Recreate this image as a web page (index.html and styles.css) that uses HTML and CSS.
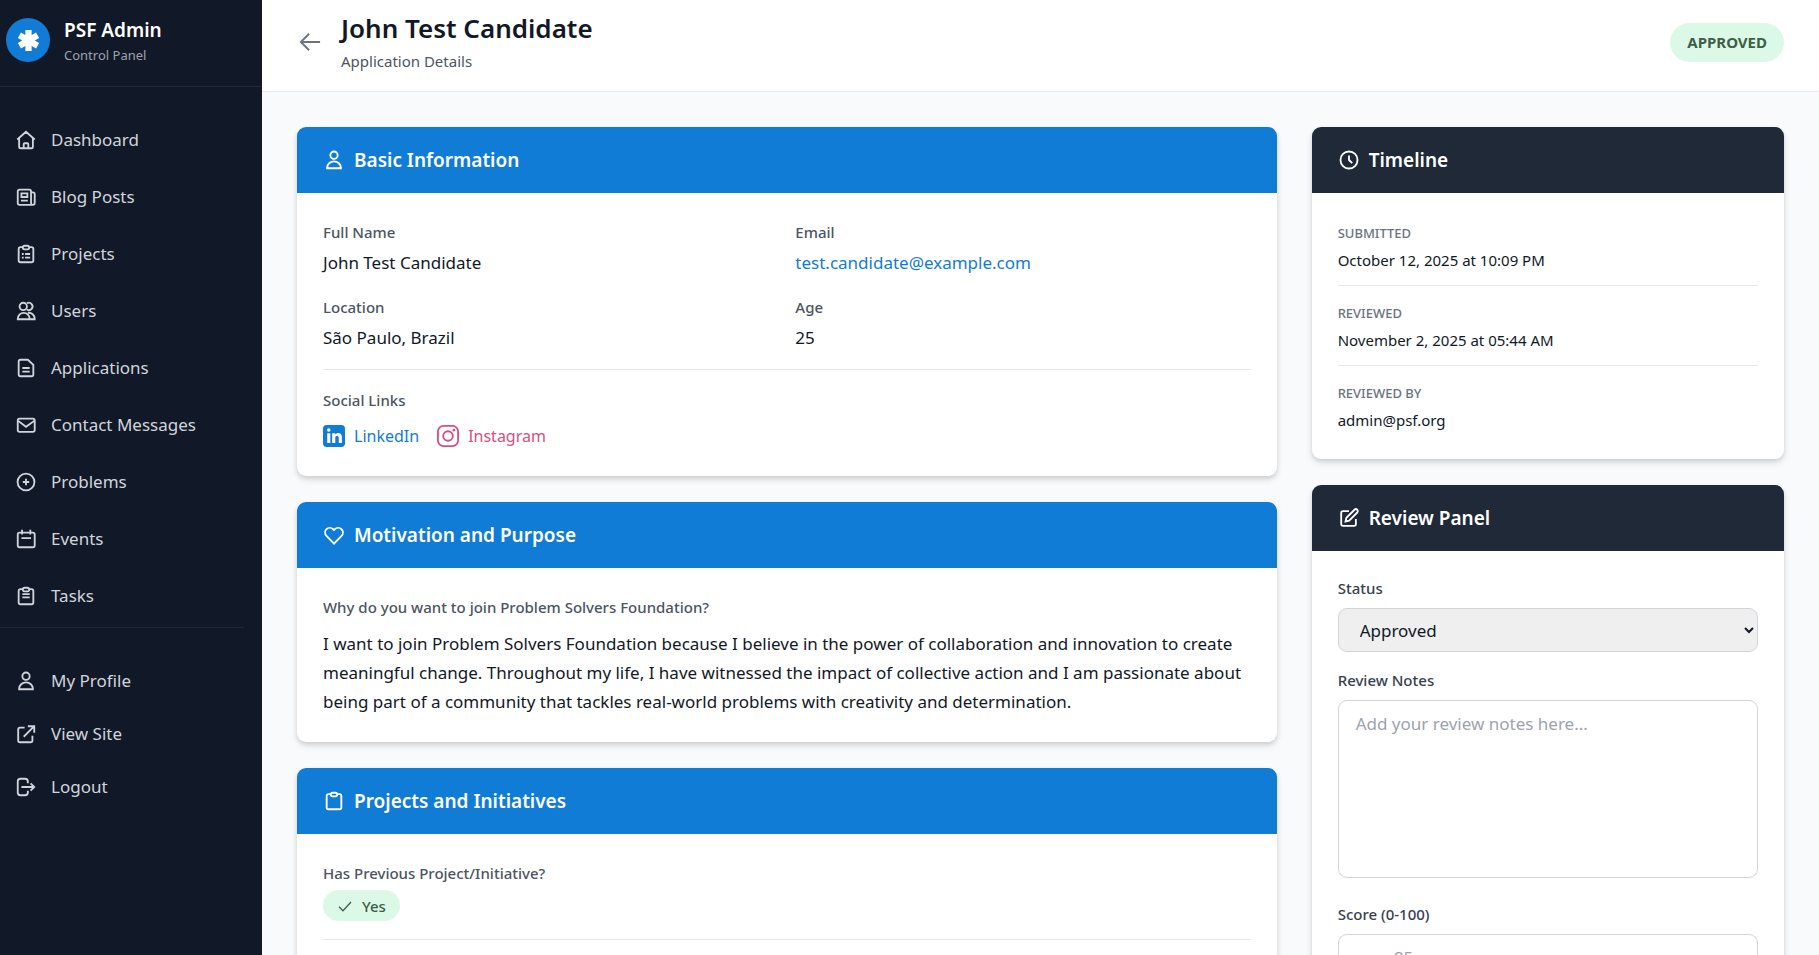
FILE: index.html
```html
<!DOCTYPE html>
<html lang="en">
<head>
    <meta charset="UTF-8">
    <meta name="viewport" content="width=device-width, initial-scale=1.0">
    <link rel="stylesheet" href="styles.css">
    <title>John Test Candidate - PSF Admin</title>
</head>
<body>
    <aside class="sidebar">
        <div class="brand">
            <div class="brand-logo">
                <svg viewBox="0 0 24 24" aria-hidden="true"><path d="M12 1v22M2.500 6.500l19 11M21.500 6.500l-19 11" fill="none" stroke="#fff" stroke-width="6.500"/></svg>
            </div>
            <div>
                <div class="brand-name">PSF Admin</div>
                <div class="brand-sub">Control Panel</div>
            </div>
        </div>

        <nav>
            <ul class="menu">
                <li><a href="#"><svg class="icon" viewBox="0 0 24 24"><path d="M2.500 11.500L12 3l9.500 8.500M4.500 10v9.500a1.500 1.500 0 0 0 1.500 1.500h12a1.500 1.500 0 0 0 1.500-1.500V10M9.500 21v-4.500a1 1 0 0 1 1-1h3a1 1 0 0 1 1 1V21"/></svg>Dashboard</a></li>
                <li><a href="#"><svg class="icon" viewBox="0 0 24 24"><path d="M19.500 20.500H5a2 2 0 0 1-2-2V6a2 2 0 0 1 2-2h10.500a2 2 0 0 1 2 2v12.500a2 2 0 0 0 4 0V9a2 2 0 0 0-2-2h-2M7 8h6.500v4H7zM6.500 16H14"/></svg>Blog Posts</a></li>
                <li><a href="#"><svg class="icon" viewBox="0 0 24 24"><path d="M8.500 4.500H6A2 2 0 0 0 4 6.500V19a2 2 0 0 0 2 2h12a2 2 0 0 0 2-2V6.500a2 2 0 0 0-2-2h-2.500M10.500 3h3a2 2 0 0 1 0 4h-3a2 2 0 0 1 0-4zM7.500 12h2M11 12h5.500M7.500 16h2M11 16h5.500"/></svg>Projects</a></li>
                <li><a href="#"><svg class="icon" viewBox="0 0 24 24"><circle cx="9" cy="7" r="4"/><path d="M13 3.600a4 4 0 1 1 0 6.800M3 21v-.500a6.500 6.500 0 0 1 13 0v.500zM14 14a6.500 6.500 0 0 1 7.500 6.500v.500H16"/></svg>Users</a></li>
                <li><a href="#"><svg class="icon" viewBox="0 0 24 24"><path d="M14 3H6a2 2 0 0 0-2 2v14a2 2 0 0 0 2 2h12a2 2 0 0 0 2-2V8.500zM8 12h8M8 16h8"/></svg>Applications</a></li>
                <li><a href="#"><svg class="icon" viewBox="0 0 24 24"><rect x="3" y="5" width="18.500" height="14.500" rx="2"/><path d="M3.500 7.500l8.500 6.500 9-6.500"/></svg>Contact Messages</a></li>
                <li><a href="#"><svg class="icon" viewBox="0 0 24 24"><circle cx="12" cy="12" r="9.200"/><path d="M12 8.500v7M8.500 12h7"/></svg>Problems</a></li>
                <li><a href="#"><svg class="icon" viewBox="0 0 24 24"><rect x="3" y="5" width="18.500" height="16" rx="2"/><path d="M7.700 2v5M16.700 2v5M7 11h10.500"/></svg>Events</a></li>
                <li><a href="#"><svg class="icon" viewBox="0 0 24 24"><path d="M8.500 4.500H6A2 2 0 0 0 4 6.500V19a2 2 0 0 0 2 2h12a2 2 0 0 0 2-2V6.500a2 2 0 0 0-2-2h-2.500M10.500 3h3a2 2 0 0 1 0 4h-3a2 2 0 0 1 0-4zM8 10h8M8 13.500h8"/></svg>Tasks</a></li>
            </ul>
            <ul class="menu menu-bottom">
                <li><a href="#"><svg class="icon" viewBox="0 0 24 24"><circle cx="12" cy="6.700" r="4"/><path d="M4.500 21v-.500a7.500 7 0 0 1 15 0v.500z"/></svg>My Profile</a></li>
                <li><a href="#"><svg class="icon" viewBox="0 0 24 24"><path d="M10.500 5H5.500a2 2 0 0 0-2 2v12a2 2 0 0 0 2 2H17a2 2 0 0 0 2-2v-5M14 3.500h7v7M21 3.500L9.500 15"/></svg>View Site</a></li>
                <li><a href="#"><svg class="icon" viewBox="0 0 24 24"><path d="M14 8V6a3 3 0 0 0-3-3H6a3 3 0 0 0-3 3v12a3 3 0 0 0 3 3h5a3 3 0 0 0 3-3v-2M7 12h14M17 8l4 4-4 4"/></svg>Logout</a></li>
            </ul>
        </nav>
    </aside>

    <div class="page">
        <header class="topbar">
            <a class="back" href="#" aria-label="Back"><svg class="icon" viewBox="0 0 24 24"><path d="M23 12H2M11 3l-9 9 9 9"/></svg></a>
            <div class="topbar-title">
                <h1>John Test Candidate</h1>
                <p>Application Details</p>
            </div>
            <span class="badge">APPROVED</span>
        </header>

        <main class="content">
            <div class="col-main">
                <section class="card">
                    <h2 class="card-header"><svg class="icon" viewBox="0 0 24 24"><circle cx="12" cy="6.700" r="4"/><path d="M4.500 21v-.500a7.500 7 0 0 1 15 0v.500z"/></svg>Basic Information</h2>
                    <div class="card-body">
                        <dl class="info">
                            <div>
                                <dt>Full Name</dt>
                                <dd>John Test Candidate</dd>
                            </div>
                            <div>
                                <dt>Email</dt>
                                <dd><a href="mailto:test.candidate@example.com">test.candidate@example.com</a></dd>
                            </div>
                            <div>
                                <dt>Location</dt>
                                <dd>São Paulo, Brazil</dd>
                            </div>
                            <div>
                                <dt>Age</dt>
                                <dd>25</dd>
                            </div>
                        </dl>
                        <div class="social">
                            <h3>Social Links</h3>
                            <div class="social-links">
                                <a href="#"><svg viewBox="0 0 24 24"><rect width="24" height="24" rx="4" fill="#117cd6"/><g fill="#fff"><circle cx="6.300" cy="5.500" r="1.900"/><path d="M4.600 9h3.400v10.500H4.600zM10 9h3.300v1.400c.700-1 1.800-1.700 3.300-1.700 2.900 0 4 1.800 4 4.700v6.100h-3.400v-5.400c0-1.500-.500-2.500-1.800-2.500-1.400 0-2 1-2 2.500v5.400H10z"/></g></svg>LinkedIn</a>
                                <a class="instagram" href="#"><svg viewBox="0 0 24 24" fill="none" stroke="currentColor" stroke-width="2"><rect x="1" y="1" width="22" height="22" rx="6"/><circle cx="12" cy="12" r="5.200"/><circle cx="18.400" cy="5.600" r="1.400" fill="currentColor" stroke="none"/></svg>Instagram</a>
                            </div>
                        </div>
                    </div>
                </section>

                <section class="card">
                    <h2 class="card-header"><svg class="icon" viewBox="0 0 24 24"><path d="M12 21.500L3.800 13a5.200 5.200 0 0 1 0-7.300 5.200 5.200 0 0 1 7.300 0l.900.900.900-.900a5.200 5.200 0 0 1 7.300 0 5.200 5.200 0 0 1 0 7.300z"/></svg>Motivation and Purpose</h2>
                    <div class="card-body">
                        <h3>Why do you want to join Problem Solvers Foundation?</h3>
                        <p class="answer">I want to join Problem Solvers Foundation because I believe in the power of collaboration and innovation to create meaningful change. Throughout my life, I have witnessed the impact of collective action and I am passionate about being part of a community that tackles real-world problems with creativity and determination.</p>
                    </div>
                </section>

                <section class="card">
                    <h2 class="card-header"><svg class="icon" viewBox="0 0 24 24"><path d="M8.500 4.500H6A2 2 0 0 0 4 6.500V19a2 2 0 0 0 2 2h12a2 2 0 0 0 2-2V6.500a2 2 0 0 0-2-2h-2.500M10.500 3h3a2 2 0 0 1 0 4h-3a2 2 0 0 1 0-4z"/></svg>Projects and Initiatives</h2>
                    <div class="card-body">
                        <h3>Has Previous Project/Initiative?</h3>
                        <span class="pill"><svg class="icon" viewBox="0 0 24 24"><path d="M3 13l6 6L21 6"/></svg>Yes</span>
                        <div class="divider"></div>
                    </div>
                </section>
            </div>

            <div class="col-side">
                <section class="card">
                    <h2 class="card-header dark"><svg class="icon" viewBox="0 0 24 24"><circle cx="12" cy="12" r="9.300"/><path d="M12 7v5l3.500 3.500"/></svg>Timeline</h2>
                    <dl class="card-body timeline">
                        <div>
                            <dt>SUBMITTED</dt>
                            <dd>October 12, 2025 at 10:09 PM</dd>
                        </div>
                        <div>
                            <dt>REVIEWED</dt>
                            <dd>November 2, 2025 at 05:44 AM</dd>
                        </div>
                        <div>
                            <dt>REVIEWED BY</dt>
                            <dd>admin@psf.org</dd>
                        </div>
                    </dl>
                </section>

                <section class="card">
                    <h2 class="card-header dark"><svg class="icon" viewBox="0 0 24 24"><path d="M12 4.500H5.500a2 2 0 0 0-2 2v12a2 2 0 0 0 2 2h12a2 2 0 0 0 2-2V13M18 3a2.100 2.100 0 0 1 3 3l-8.800 8.800-4 1 1-4z"/></svg>Review Panel</h2>
                    <form class="card-body review">
                        <div class="field">
                            <label for="status">Status</label>
                            <select id="status" name="status">
                                <option>Approved</option>
                            </select>
                        </div>
                        <div class="field">
                            <label for="notes">Review Notes</label>
                            <textarea id="notes" name="notes" rows="6" placeholder="Add your review notes here..."></textarea>
                        </div>
                        <div class="field">
                            <label for="score">Score (0-100)</label>
                            <input type="number" id="score" name="score" min="0" max="100" placeholder="e.g., 85">
                        </div>
                    </form>
                </section>
            </div>
        </main>
    </div>
</body>
</html>
```
FILE: styles.css
```css
* {
    box-sizing: border-box;
}

body {
    display: flex;
    height: 100vh;
    margin: 0;
    overflow: hidden;
    font-family: "Noto Sans", sans-serif;
    font-size: 17px;
    line-height: 28px;
    color: #111827;
    background-color: #f9fafc;
}

h1, h2, h3, p, ul, dl, dd {
    margin: 0;
    padding: 0;
}

a {
    color: #117cd6;
    text-decoration: none;
}

.icon {
    flex: none;
    width: 22px;
    height: 22px;
    fill: none;
    stroke: currentColor;
    stroke-width: 2;
}

/* Sidebar */
.sidebar {
    flex: none;
    width: 262px;
    background-color: #111827;
}

.brand {
    display: flex;
    align-items: center;
    gap: 14px;
    height: 87px;
    padding: 0 6px 6px;
    border-bottom: 1px solid #1f2937;
}

.brand-logo {
    display: flex;
    align-items: center;
    justify-content: center;
    width: 44px;
    height: 44px;
    border-radius: 50%;
    background-color: #117cd6;
}

.brand-logo svg {
    width: 23px;
    height: 23px;
}

.brand-name {
    font-size: 19px;
    font-weight: 600;
    line-height: 29px;
    color: #fff;
}

.brand-sub {
    font-size: 13px;
    line-height: 20px;
    color: #9ca3af;
}

.menu {
    display: flex;
    flex-direction: column;
    gap: 8px;
    padding: 28px 0 7px;
    list-style: none;
}

.menu a {
    display: flex;
    align-items: center;
    gap: 14px;
    height: 49px;
    padding: 0 15px;
    color: #d1d5db;
}

.menu-bottom {
    gap: 4px;
    margin-right: 18px;
    border-top: 1px solid #1f2937;
}

/* Top bar */
.page {
    display: flex;
    flex: 1;
    flex-direction: column;
    min-width: 0;
}

.topbar {
    display: flex;
    flex: none;
    align-items: center;
    gap: 18px;
    height: 92px;
    padding: 0 35px 7px;
    border-bottom: 1px solid #e5e7eb;
    background-color: #fff;
}

.back {
    display: flex;
    color: #6b7280;
}

.back .icon {
    width: 26px;
}

.topbar-title {
    flex: 1;
}

.topbar h1 {
    font-size: 26px;
    font-weight: 600;
    line-height: 37px;
}

.topbar p {
    font-size: 15px;
    color: #4b5563;
}

.badge {
    padding: 5px 17px 6px;
    border-radius: 20px;
    font-size: 15px;
    font-weight: 700;
    color: #3d5f45;
    background-color: #dcf9e7;
}

/* Cards */
.content {
    display: grid;
    flex: 1;
    grid-template-columns: repeat(3, 1fr);
    align-items: start;
    gap: 35px;
    padding: 35px;
    overflow-y: auto;
    scrollbar-width: none;
}

.col-main {
    grid-column: span 2;
}

.card {
    margin-bottom: 26px;
    border-radius: 9px;
    background-color: #fff;
    box-shadow: 0 4px 7px rgba(0, 0, 0, 0.1), 0 2px 4px rgba(0, 0, 0, 0.1);
}

.card-header {
    display: flex;
    align-items: center;
    gap: 9px;
    height: 66px;
    padding: 0 26px;
    border-radius: 9px 9px 0 0;
    font-size: 19px;
    font-weight: 600;
    color: #fff;
    background-color: #117cd6;
}

.card-header.dark {
    background-color: #1f2937;
}

.card-body {
    padding: 26px;
}

.info {
    display: grid;
    grid-template-columns: 1fr 1fr;
    gap: 17px;
}

.info dt,
.card h3 {
    margin-bottom: 4px;
    font-size: 15px;
    font-weight: 500;
    line-height: 26px;
    color: #4b5563;
}

.social {
    margin-top: 17px;
    padding-top: 17px;
    border-top: 1px solid #e5e7eb;
}

.social-links {
    display: flex;
    gap: 18px;
    padding-top: 5px;
}

.social-links a {
    display: flex;
    align-items: center;
    gap: 9px;
    font-size: 16px;
}

.social-links svg {
    width: 22px;
    height: 22px;
}

.social-links .instagram {
    color: #db4d7f;
}

.answer {
    padding-top: 5px;
    line-height: 29px;
}

.pill {
    display: inline-flex;
    align-items: center;
    gap: 9px;
    height: 31px;
    padding: 0 14px;
    border-radius: 16px;
    font-size: 15px;
    font-weight: 500;
    color: #3d5f45;
    background-color: #dcf9e7;
}

.pill .icon {
    width: 16px;
    height: 16px;
}

.divider {
    margin-top: 17px;
    border-top: 1px solid #e5e7eb;
}

/* Timeline */
.timeline div + div {
    margin-top: 12px;
    padding-top: 13px;
    border-top: 1px solid #e5e7eb;
}

.timeline dt {
    font-size: 13px;
    font-weight: 500;
    color: #6b7280;
}

.timeline dd {
    font-size: 15px;
    line-height: 26px;
}

/* Review form */
.field {
    margin-bottom: 17px;
}

.field label {
    display: block;
    margin-bottom: 9px;
    font-size: 15px;
    font-weight: 500;
    line-height: 22px;
    color: #374151;
}

.field select,
.field textarea,
.field input {
    width: 100%;
    padding: 10px 17px;
    border: 1px solid #d1d5db;
    border-radius: 9px;
    font-family: inherit;
    font-size: 17px;
    line-height: 26px;
    color: #111827;
}

.field select {
    display: block;
    height: 44px;
    padding: 0 17px;
    background-color: #efefef;
}

.field textarea {
    resize: none;
}

.field ::placeholder {
    color: #9ca3af;
}
```
